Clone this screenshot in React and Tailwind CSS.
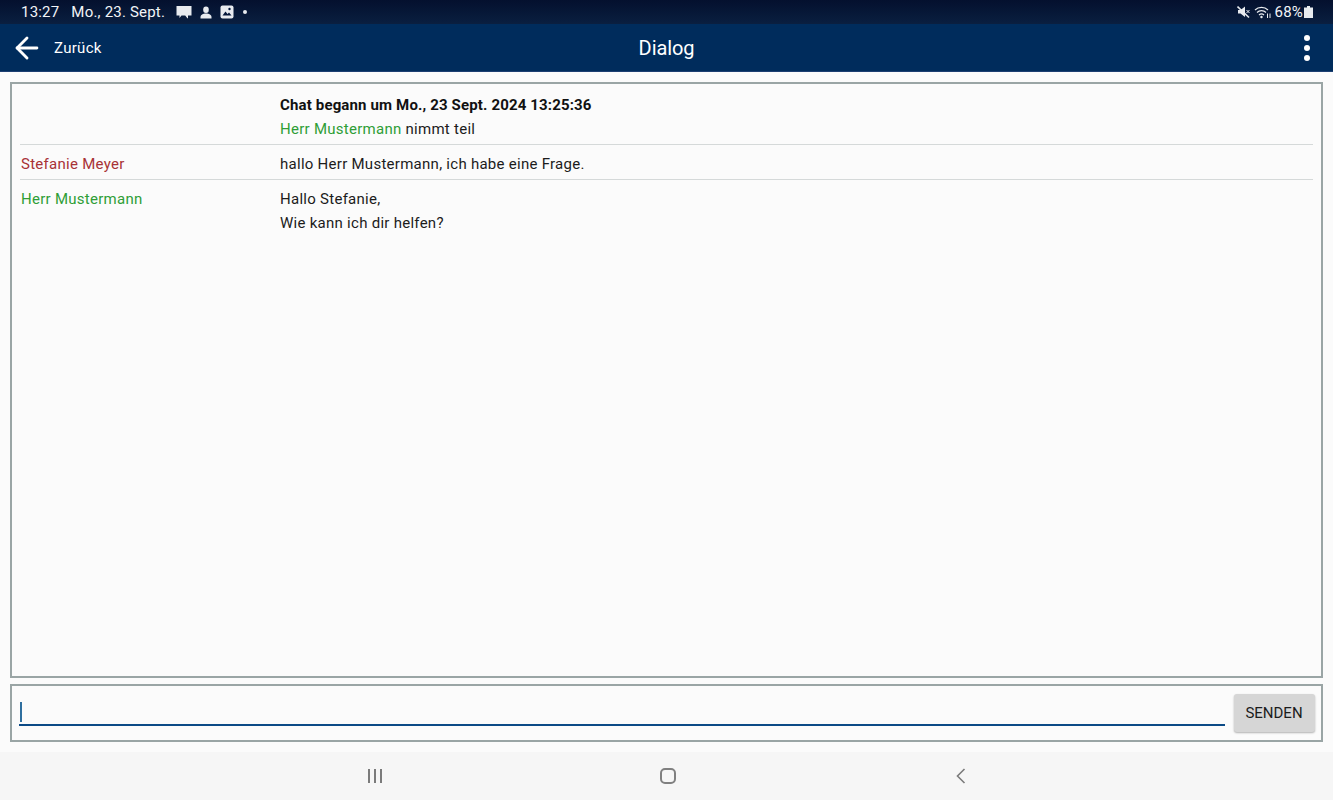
import React from 'react';
import { ArrowLeft } from 'lucide-react';

const Row = ({ name, nameColor, children }) => {
    return (
        <div className="flex border-b border-[#d5d9d9] last:border-b-0 pt-[7px] pb-[3px]">
            <div className={`w-[260px] shrink-0 pl-[1px] leading-[24px] ${nameColor}`}>{name}</div>
            <div className="leading-[24px] text-[#1c1c1c]">{children}</div>
        </div>
    );
};

const StatusBar = () => {
    return (
        <div className="h-[24px] bg-gradient-to-b from-[#04102e] to-[#0a1f40] text-[#f2f4f7] flex items-center justify-between pl-[21px] pr-[20px] text-[15px] tracking-[0.2px]">
            <div className="flex items-center">
                <span>13:27</span>
                <span className="ml-[12px]">Mo., 23. Sept.</span>
                {/* Notification icons */}
                <svg className="ml-[11px]" width="16" height="14" viewBox="0 0 16 14" fill="#e8ebef">
                    <path d="M0.500 1h15v9.500h-3.500v3l-.800-.5-2-2.500H5.500L3.500 13v-2.500h-3z" />
                </svg>
                <svg className="ml-[8px]" width="12" height="13" viewBox="0 0 12 13" fill="#e8ebef">
                    <ellipse cx="6" cy="3.800" rx="2.800" ry="3.300" />
                    <path d="M0.500 12.500v-1.500c0-2 2.500-3.500 5.500-3.500s5.500 1.500 5.500 3.500v1.500z" />
                </svg>
                <svg className="ml-[8px]" width="14" height="14" viewBox="0 0 14 14">
                    <rect x="0.500" y="0.500" width="13" height="13" rx="2" fill="#e8ebef" />
                    <path d="M2.500 10.500l3-4 2 2.500 1.500-1.500 2.500 3z" fill="#05173a" />
                    <circle cx="9.500" cy="4" r="1.200" fill="#05173a" />
                </svg>
                <span className="ml-[9px] w-[4px] h-[4px] rounded-full bg-[#e8ebef]" />
            </div>
            <div className="flex items-center">
                <svg width="13" height="14" viewBox="0 0 13 14" fill="#e8ebef">
                    <path d="M1 5h2.500L8 1.500v10.500L3.500 8.500H1z" />
                    <path d="M0.500 1.500l11.500 11" stroke="#e8ebef" strokeWidth="1.600" />
                    <path d="M9.500 5l3 3M12.500 5l-3 3" stroke="#e8ebef" strokeWidth="1" />
                </svg>
                <svg className="ml-[4px]" width="18" height="14" viewBox="0 0 18 14" fill="none" stroke="#e8ebef" strokeWidth="1.200">
                    <path d="M1 5c3.500-3.500 9.500-3.500 13 0" />
                    <path d="M3 7.500c2.500-2.500 6.500-2.500 9 0" />
                    <path d="M5 10c1.500-1.300 3.500-1.300 5 0" />
                    <circle cx="7.500" cy="12" r="0.600" fill="#e8ebef" />
                    <path d="M13.500 8.500v4.500M16 8.500v4.500" strokeWidth="1" />
                </svg>
                <span className="ml-[3px]">68%</span>
                <svg className="ml-[1px]" width="9" height="12" viewBox="0 0 9 12" fill="#e8ebef">
                    <path d="M3 0h3v1.500h3V12H0V1.500h3z" />
                </svg>
            </div>
        </div>
    );
};

const App = () => {
    return (
        <div className="w-[1333px] h-[800px] flex flex-col overflow-hidden bg-[#fbfbfb] font-['Roboto',sans-serif]">
            <StatusBar />

            {/* Header */}
            <div className="h-[48px] bg-[#002c5c] border-b border-[#1d3f72] text-white flex items-center justify-between px-[8px]">
                <div className="flex items-center w-[200px] pl-[2px]">
                    <ArrowLeft size={34} strokeWidth={2} />
                    <span className="ml-[10px] mt-[1px] text-[15px] tracking-[0.3px]">Zurück</span>
                </div>
                <div className="text-[20px] tracking-[-0.1px]">Dialog</div>
                <div className="w-[200px] flex justify-end pr-[15px]">
                    <div className="flex flex-col gap-[4px]">
                        <span className="w-[6px] h-[6px] rounded-full bg-white" />
                        <span className="w-[6px] h-[6px] rounded-full bg-white" />
                        <span className="w-[6px] h-[6px] rounded-full bg-white" />
                    </div>
                </div>
            </div>

            {/* Chat */}
            <div className="flex-1 flex flex-col gap-[6px] p-[10px] text-[15px] tracking-[0.27px]">
                <div className="flex-1 border-2 border-[#9aa5a5] px-[8px] pt-[2px]">
                    <Row name="" nameColor="">
                        <div className="font-bold text-[#111111] tracking-[0.15px]">Chat begann um Mo., 23 Sept. 2024 13:25:36</div>
                        <div><span className="text-[#2e9e36]">Herr Mustermann</span> nimmt teil</div>
                    </Row>
                    <Row name="Stefanie Meyer" nameColor="text-[#a83236]">
                        hallo Herr Mustermann, ich habe eine Frage.
                    </Row>
                    <Row name="Herr Mustermann" nameColor="text-[#2e9e36]">
                        <div>Hallo Stefanie,</div>
                        <div>Wie kann ich dir helfen?</div>
                    </Row>
                </div>

                {/* Input */}
                <div className="h-[58px] border-2 border-[#9aa5a5] flex items-start pl-[7px] pr-[6px]">
                    <div className="flex-1 h-[40px] border-b-2 border-[#0b4a86] flex items-end pb-[2px] pl-[1px]">
                        <span className="w-[2px] h-[20px] bg-[#2f6f9f]" />
                    </div>
                    <div className="ml-[9px] mt-[8px] w-[81px] h-[38px] rounded-[3px] bg-[#d6d6d6] shadow-[0_1px_2px_rgba(0,0,0,0.3)] flex items-center justify-center text-[15px] tracking-normal text-[#1c1c1c] pr-[1px]">
                        SENDEN
                    </div>
                </div>
            </div>

            {/* Android nav */}
            <div className="h-[48px] bg-[#f6f6f6] flex items-center justify-center gap-[273px] pl-[3px]">
                <div className="w-[20px] flex justify-center gap-[4px]">
                    <span className="w-[2px] h-[14px] bg-[#7b7b7b]" />
                    <span className="w-[2px] h-[14px] bg-[#7b7b7b]" />
                    <span className="w-[2px] h-[14px] bg-[#7b7b7b]" />
                </div>
                <div className="w-[20px] flex justify-center">
                    <div className="w-[16px] h-[16px] border-2 border-[#808080] rounded-[5px]" />
                </div>
                <div className="w-[20px] flex justify-center">
                    <svg width="10" height="16" viewBox="0 0 10 16" fill="none" stroke="#7b7b7b" strokeWidth="1.600">
                        <path d="M8.500 1L1.500 8l7 7" />
                    </svg>
                </div>
            </div>
        </div>
    );
};

export default App;
